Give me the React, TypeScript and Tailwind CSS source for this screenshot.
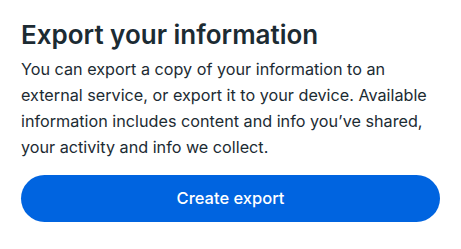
export default function App() {
  return (
    <div className="min-h-screen bg-white px-[21px] pt-[18px] font-['Inter',sans-serif]">
      <h1 className="text-[26px] font-semibold leading-[34px] text-[#1c2b33]">
        Export your information
      </h1>
      <p className="mt-[4px] text-[16.2px] leading-[26px] text-[#1c2b33]">
        You can export a copy of your information to an external service, or export it to your device. Available information includes content and info you’ve shared, your activity and info we collect.
      </p>
      <button className="mt-[15px] flex h-[47px] w-full items-center justify-center rounded-full bg-[#0064e0] text-[16.5px] font-medium text-white">
        Create export
      </button>
    </div>
  );
}
